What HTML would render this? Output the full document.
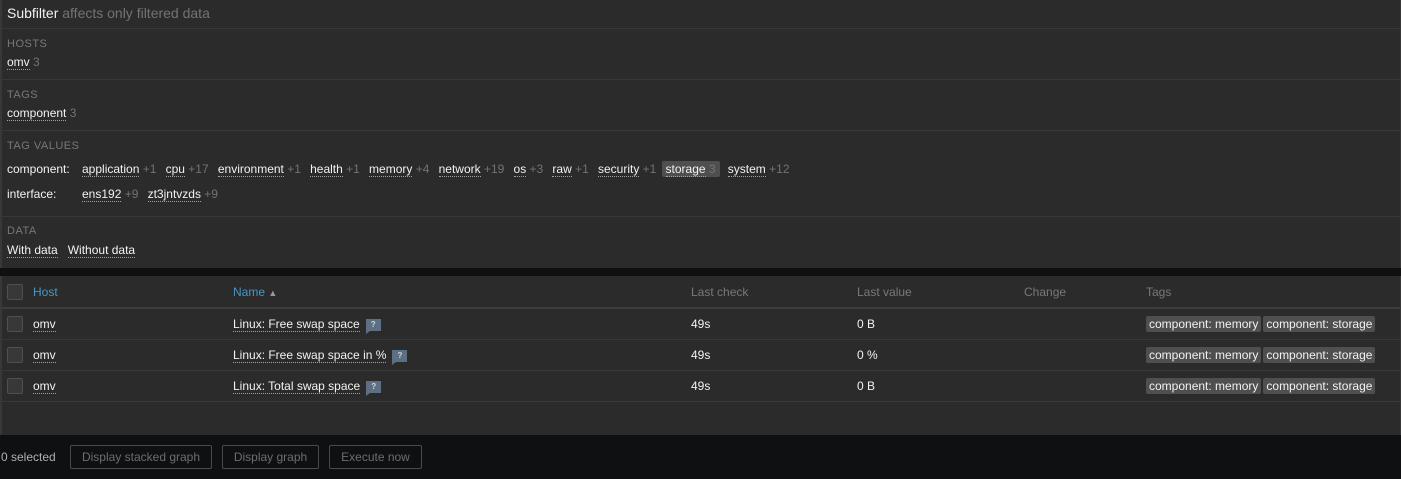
<!DOCTYPE html>
<html><head><style>
*{margin:0;padding:0;box-sizing:border-box}
body{width:1401px;height:479px;background:#0e1012;font-family:"Liberation Sans",Arial,sans-serif;font-size:12px;color:#f2f2f2;position:relative;overflow:hidden}
.a{position:absolute;white-space:nowrap}
.p{position:absolute;background:#2b2b2b;border-left:2px solid #383838;border-right:1px solid #383838}
.hr{position:absolute;left:2px;right:1px;height:1px;background:#383838}
.lbl{color:#787878;font-size:11px;letter-spacing:.5px}
.l{border-bottom:1px dotted #a0a0a0}
.g{color:#737373}
.it{margin-right:9.2px}
.hl{background:#4f4f4f;border-radius:2px;padding:1px 4px;margin-left:-4px;margin-right:8.2px}
.cb{position:absolute;left:7px;width:16px;height:16px;border:1px solid #4f4f4f;background:#383838;border-radius:2px}
.th{color:#787878}
.blue{color:#4796c4}
.tag{background:#4f4f4f;border-radius:2px;padding:1px 3px;color:#f2f2f2;margin-right:2px}
.q{display:inline-block;width:15px;height:12px;background:#5d7083;color:#cfd8e0;font-size:8px;text-align:center;line-height:12px;font-weight:bold;margin-left:6px;vertical-align:1px;position:relative}
.q:after{content:"";position:absolute;left:0;bottom:-3px;border-left:4px solid #5d7083;border-bottom:3px solid transparent}
.btn{position:absolute;top:445px;height:24px;border:1px solid #4a4a4a;border-radius:2px;color:#6e6e6e;text-align:center;line-height:22px}
</style></head><body>
<div class="p" style="left:0;top:0;width:1401px;height:268px"></div>
<div class="a" style="left:7px;top:5px;font-size:14px">Subfilter <span class="g">affects only filtered data</span></div>
<div class="hr" style="top:28px"></div>
<div class="a lbl" style="left:7px;top:38px">HOSTS</div>
<div class="a" style="left:7px;top:55px"><span class="l">omv</span> <span class="g">3</span></div>
<div class="hr" style="top:79px"></div>
<div class="a lbl" style="left:7px;top:89px">TAGS</div>
<div class="a" style="left:7px;top:106px"><span class="l">component</span> <span class="g">3</span></div>
<div class="hr" style="top:130px"></div>
<div class="a lbl" style="left:7px;top:140px">TAG VALUES</div>
<div class="a" style="left:7px;top:162px">component:</div>
<div class="a" style="left:82px;top:162px"><span class="it"><span class="l">application</span> <span class="g">+1</span></span><span class="it"><span class="l">cpu</span> <span class="g">+17</span></span><span class="it"><span class="l">environment</span> <span class="g">+1</span></span><span class="it"><span class="l">health</span> <span class="g">+1</span></span><span class="it"><span class="l">memory</span> <span class="g">+4</span></span><span class="it"><span class="l">network</span> <span class="g">+19</span></span><span class="it"><span class="l">os</span> <span class="g">+3</span></span><span class="it"><span class="l">raw</span> <span class="g">+1</span></span><span class="it"><span class="l">security</span> <span class="g">+1</span></span><span class="hl"><span class="l">storage</span> <span class="g">3</span></span><span class="it"><span class="l">system</span> <span class="g">+12</span></span></div>
<div class="a" style="left:7px;top:187px">interface:</div>
<div class="a" style="left:82px;top:187px"><span class="it"><span class="l">ens192</span> <span class="g">+9</span></span><span class="it"><span class="l">zt3jntvzds</span> <span class="g">+9</span></span></div>
<div class="hr" style="top:216px"></div>
<div class="a lbl" style="left:7px;top:225px">DATA</div>
<div class="a" style="left:7px;top:243px"><span class="l">With data</span>&nbsp;&nbsp; <span class="l">Without data</span></div>

<div class="p" style="left:0;top:276px;width:1401px;height:159px"></div>
<div class="cb" style="top:284px"></div>
<div class="a blue" style="left:33px;top:285px">Host</div>
<div class="a blue" style="left:233px;top:285px">Name <span style="color:#9a9a9a;font-size:9px">▲</span></div>
<div class="a th" style="left:691px;top:285px">Last check</div>
<div class="a th" style="left:857px;top:285px">Last value</div>
<div class="a th" style="left:1024px;top:285px">Change</div>
<div class="a th" style="left:1146px;top:285px">Tags</div>
<div class="hr" style="top:307px;height:2px;background:#3d3d3d"></div>

<div class="cb" style="top:316px"></div>
<div class="a" style="left:33px;top:317px"><span class="l">omv</span></div>
<div class="a" style="left:233px;top:317px"><span class="l">Linux: Free swap space</span><span class="q">?</span></div>
<div class="a" style="left:691px;top:317px">49s</div>
<div class="a" style="left:857px;top:317px">0 B</div>
<div class="a" style="left:1146px;top:317px"><span class="tag">component: memory</span><span class="tag">component: storage</span></div>
<div class="hr" style="top:339px"></div>

<div class="cb" style="top:347px"></div>
<div class="a" style="left:33px;top:348px"><span class="l">omv</span></div>
<div class="a" style="left:233px;top:348px"><span class="l">Linux: Free swap space in %</span><span class="q">?</span></div>
<div class="a" style="left:691px;top:348px">49s</div>
<div class="a" style="left:857px;top:348px">0 %</div>
<div class="a" style="left:1146px;top:348px"><span class="tag">component: memory</span><span class="tag">component: storage</span></div>
<div class="hr" style="top:370px"></div>

<div class="cb" style="top:378px"></div>
<div class="a" style="left:33px;top:379px"><span class="l">omv</span></div>
<div class="a" style="left:233px;top:379px"><span class="l">Linux: Total swap space</span><span class="q">?</span></div>
<div class="a" style="left:691px;top:379px">49s</div>
<div class="a" style="left:857px;top:379px">0 B</div>
<div class="a" style="left:1146px;top:379px"><span class="tag">component: memory</span><span class="tag">component: storage</span></div>
<div class="hr" style="top:401px"></div>

<div class="a" style="left:1px;top:450px;color:#b0b0b0">0 selected</div>
<div class="btn" style="left:70px;width:142px">Display stacked graph</div>
<div class="btn" style="left:222px;width:97px">Display graph</div>
<div class="btn" style="left:329px;width:93px">Execute now</div>
</body></html>
